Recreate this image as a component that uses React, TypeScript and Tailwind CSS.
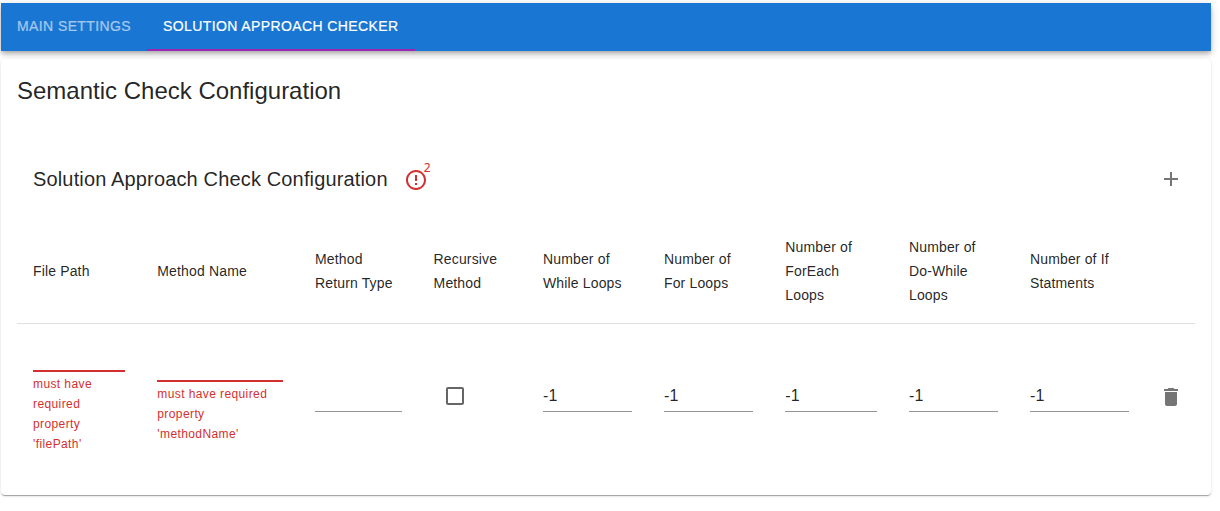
import { MdAdd, MdCheckBoxOutlineBlank, MdDelete, MdErrorOutline } from "react-icons/md";

const COLUMNS =
  "grid grid-cols-[124.3px_157.7px_118.6px_109.4px_121px_121.3px_123.7px_121px_131px_50px]";

const HEADERS: string[][] = [
  ["File Path"],
  ["Method Name"],
  ["Method", "Return Type"],
  ["Recursive", "Method"],
  ["Number of", "While Loops"],
  ["Number of", "For Loops"],
  ["Number of", "ForEach", "Loops"],
  ["Number of", "Do-While", "Loops"],
  ["Number of If", "Statments"],
];

function Field({ value }: { value: string }) {
  return (
    <div className="px-4 pt-14">
      <div className="h-8 border-b border-black/[0.42] pt-1 text-[16px] leading-[23px] tracking-[0.15px]">
        {value}
      </div>
    </div>
  );
}

function ErrorField({ lines }: { lines: string[] }) {
  return (
    <>
      <div className="h-8 border-b-2 border-[#d32f2f]" />
      <div className="mt-[2px] text-[12px] leading-5 tracking-[0.4px] whitespace-nowrap text-[#d32f2f]">
        {lines.map((line) => (
          <div key={line}>{line}</div>
        ))}
      </div>
    </>
  );
}

export default function App() {
  return (
    <div className="h-[511px] w-[1220px] overflow-hidden bg-white pt-[3px] pl-px font-['Liberation_Sans',Arial,sans-serif] text-black/[0.87]">
      <header className="flex h-12 w-[1210px] bg-[#1976d2] text-[14px] leading-[46px] font-normal tracking-[0.4px] whitespace-nowrap text-white shadow-[0_2px_4px_-1px_rgba(0,0,0,0.2),0_4px_5px_0_rgba(0,0,0,0.14),0_1px_10px_0_rgba(0,0,0,0.12)]">
        <div className="w-[146px] pl-4 opacity-60 [-webkit-text-stroke:0.2px]">MAIN SETTINGS</div>
        <div className="w-[268px] border-b-2 border-[#9c27b0] pl-4 [-webkit-text-stroke:0.2px]">
          SOLUTION APPROACH CHECKER
        </div>
      </header>

      <main className="relative mt-2 h-[436px] w-[1210px] rounded bg-white p-4 shadow-[0_2px_1px_-1px_rgba(0,0,0,0.2),0_1px_1px_0_rgba(0,0,0,0.14),0_1px_3px_0_rgba(0,0,0,0.12)]">
        <h1 className="text-[24px] leading-8">Semantic Check Configuration</h1>

        <div className="mt-14 flex h-8 items-center pr-3 pl-4">
          <h2 className="text-[20px] leading-8 tracking-[0.15px] whitespace-nowrap">
            Solution Approach Check Configuration
          </h2>
          <div className="relative mt-[2px] ml-4 text-[#d32f2f]">
            <MdErrorOutline size={24} />
            <span className="absolute -top-[6px] left-[20px] font-['Noto_Sans',sans-serif] text-[12px] leading-3">
              2
            </span>
          </div>
          <MdAdd size={24} className="ml-auto text-black/[0.54]" />
        </div>

        <div className={`${COLUMNS} mt-6 h-[105px] items-center border-b border-[#e0e0e0]`}>
          {HEADERS.map((lines) => (
            <div
              key={lines.join(" ")}
              className="px-4 text-[14px] leading-6 tracking-[0.15px] whitespace-nowrap"
            >
              {lines.map((line) => (
                <div key={line}>{line}</div>
              ))}
            </div>
          ))}
        </div>

        <div className={`${COLUMNS} items-start`}>
          <div className="px-4 pt-4">
            <ErrorField lines={["must have", "required", "property", "'filePath'"]} />
          </div>
          <div className="px-4 pt-[26px]">
            <ErrorField lines={["must have required", "property", "'methodName'"]} />
          </div>
          <Field value="" />
          <div className="pt-[60px] pl-[25px] text-black/60">
            <MdCheckBoxOutlineBlank size={24} />
          </div>
          <Field value="-1" />
          <Field value="-1" />
          <Field value="-1" />
          <Field value="-1" />
          <Field value="-1" />
          <div className="pt-[61px] pl-[14px] text-black/[0.54]">
            <MdDelete size={24} />
          </div>
        </div>
      </main>
    </div>
  );
}
